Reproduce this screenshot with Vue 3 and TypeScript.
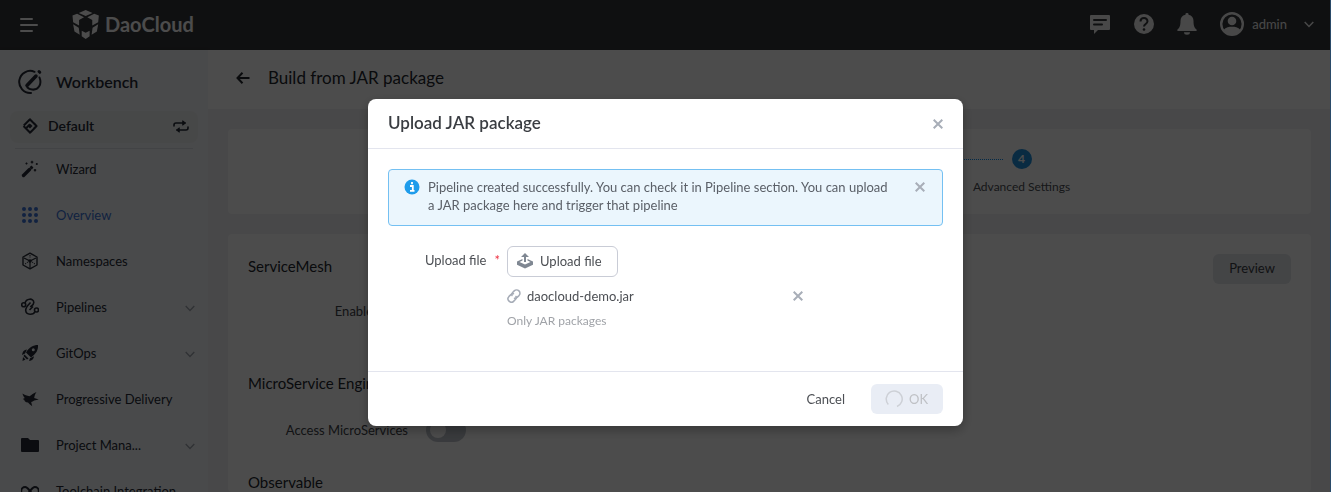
<script setup lang="ts">
import { ref } from 'vue'

interface NavItem {
  label: string
  icon: string
  active?: boolean
  expandable?: boolean
}

const navItems: NavItem[] = [
  { label: 'Wizard', icon: 'wizard' },
  { label: 'Overview', icon: 'overview', active: true },
  { label: 'Namespaces', icon: 'namespaces' },
  { label: 'Pipelines', icon: 'pipelines', expandable: true },
  { label: 'GitOps', icon: 'gitops', expandable: true },
  { label: 'Progressive Delivery', icon: 'delivery' },
  { label: 'Project Mana...', icon: 'project', expandable: true },
  { label: 'Toolchain Integration', icon: 'toolchain' },
]

const gridDots = [3, 9, 15]
const accessMicroServices = ref(false)
const modalOpen = ref(true)
const alertOpen = ref(true)
const files = ref<string[]>(['daocloud-demo.jar'])

function removeFile(name: string): void {
  files.value = files.value.filter((file) => file !== name)
}
</script>

<template>
  <div class="app">
    <header class="topbar">
      <button class="plain menu" aria-label="Toggle menu">
        <svg width="18" height="14" viewBox="0 0 18 14" fill="none" stroke="currentColor" stroke-width="2" stroke-linecap="round">
          <path d="M1 1h11M1 7h16M1 13h11" />
        </svg>
      </button>
      <a class="brand" href="#">
        <svg width="27" height="29" viewBox="216 30 81 88" fill="currentColor">
          <path d="M236 39 257 30l21 9-21 9z" />
          <path d="M217 47l14-6 21 11-15 8v17l-18-10zM297 47l-14-6-21 11 15 8v17l18-10z" />
          <path d="M219 73l17 11 3 21-16-10zM295 73l-17 11-3 21 16-10z" />
          <path d="M245 93l12 6 12-6v17l-12 8-12-8z" />
        </svg>
        <span>DaoCloud</span>
      </a>
      <div class="tools">
        <button class="plain" aria-label="Messages">
          <svg width="22" height="20" viewBox="0 0 22 20">
            <path d="M2 1h18a1 1 0 0 1 1 1v13a1 1 0 0 1-1 1H9l-4 4v-4H2a1 1 0 0 1-1-1V2a1 1 0 0 1 1-1z" fill="currentColor" />
            <path d="M5 6h12M5 10.500h8" stroke="#333639" stroke-width="2" stroke-linecap="round" />
          </svg>
        </button>
        <button class="plain" aria-label="Help">
          <svg width="20" height="20" viewBox="0 0 20 20">
            <circle cx="10" cy="10" r="10" fill="currentColor" />
            <path d="M6.500 7.500C6.500 3 13.500 3 13.500 7.300c0 2.700-3.500 2.700-3.500 5.200" fill="none" stroke="#333639" stroke-width="2" />
            <circle cx="10" cy="15.500" r="1.300" fill="#333639" />
          </svg>
        </button>
        <button class="plain" aria-label="Notifications">
          <svg width="20" height="22" viewBox="0 0 20 22" fill="currentColor">
            <path d="M10 0a1.500 1.500 0 0 1 1.500 1.800C15 2.500 16.500 5 16.500 8c0 5 1 7 3.100 8.500V18H.4v-1.500C2.500 15 3.500 13 3.500 8c0-3 1.500-5.500 5-6.200A1.500 1.500 0 0 1 10 0zM7 19.200h6a3 2.500 0 0 1-6 0z" />
          </svg>
        </button>
        <button class="plain user">
          <svg width="24" height="24" viewBox="0 0 24 24">
            <circle cx="12" cy="12" r="10.800" fill="none" stroke="currentColor" stroke-width="2.400" />
            <circle cx="12" cy="9" r="4.300" fill="currentColor" />
            <path d="M3.500 18C6 15.200 9 14.800 12 14.800s6 .4 8.500 3.200A11.500 11.500 0 0 1 12 23a11.500 11.500 0 0 1-8.500-5z" fill="currentColor" />
          </svg>
          <span>admin</span>
          <svg class="caret" width="10" height="7" viewBox="0 0 10 7" fill="none" stroke="currentColor" stroke-width="1.500">
            <path d="M.7 1 5 5.500 9.300 1" />
          </svg>
        </button>
      </div>
    </header>

    <div class="body">
      <aside class="sidebar">
        <div class="product">
          <svg width="26" height="26" viewBox="0 0 26 26" fill="none" stroke="currentColor" stroke-width="2" stroke-linecap="round">
            <path d="M17.500 2.800A11 11 0 1 0 14 23.900M22.500 8.500c2.800 7-1.500 13-7.500 12-2-.2-3.600-1-4.500-2" />
            <path d="M10 16.500 19 7" stroke-width="3.500" />
            <path d="M22 2.500l.8.800" stroke-width="3" />
          </svg>
          <span>Workbench</span>
        </div>
        <button class="plain workspace">
          <svg width="16" height="16" viewBox="0 0 16 16" fill="none" stroke="currentColor" stroke-width="2.600">
            <path d="M1.800 7.500 7.500 1.800M5.500 3.800 8 1.500l2.800 2.800M9.800 3.300l4.700 4.700M12.200 5.500 14.500 8l-2.800 2.800M14.200 8.500 8.500 14.200M10.500 12.200 8 14.500l-2.800-2.800M6.200 12.700 1.500 8M3.800 10.500 8 6.300" stroke-width="2" />
            <path d="M6 8.500 8.500 6l2 2L8 10.500z" fill="currentColor" stroke="none" />
          </svg>
          <span>Default</span>
          <svg class="swap" width="16" height="13" viewBox="0 0 16 13" fill="none" stroke="currentColor" stroke-width="1.600" stroke-linecap="round" stroke-linejoin="round">
            <path d="M1 6V5a2 2 0 0 1 2-2h9M15 7v1a2 2 0 0 1-2 2H4" />
            <path d="M10 1 12.500 3 10 5zM6 8 3.500 10 6 12z" fill="currentColor" stroke-width="1" />
          </svg>
        </button>
        <nav>
          <ul>
            <li v-for="item in navItems" :key="item.label">
              <a href="#" :class="{ active: item.active }">
                <svg width="18" height="18" viewBox="0 0 18 18" fill="none" stroke="currentColor">
                  <template v-if="item.icon === 'wizard'">
                    <path d="M2.500 15.500 8.500 9.500" stroke-width="3.400" stroke-linecap="round" />
                    <path d="M9 6.800 11.300 9M10 6l2 2" stroke-width="1.200" />
                    <path d="M11 .8v2.600M9.700 2.100h2.600M5.500 2.500v2M4.500 3.500h2M15.800 3v2M14.800 4h2M14 9v2.400M12.800 10.200h2.400" stroke-width="1.200" />
                  </template>
                  <g v-else-if="item.icon === 'overview'" fill="currentColor" stroke="none">
                    <template v-for="y in gridDots" :key="y">
                      <circle v-for="x in gridDots" :key="x" :cx="x" :cy="y" r="2" />
                    </template>
                  </g>
                  <g v-else-if="item.icon === 'namespaces'" stroke-width="1.400" stroke-linejoin="round">
                    <path d="M9 1.200 16 5v8l-7 3.800L2 13V5z" />
                    <path d="M9 9v7M9 9 3 6M9 9l6-3" stroke-width="1.200" />
                    <path d="M9 3v3M4 12l3-2M14 12l-3-2" stroke-dasharray="1.500 1" stroke-width="1" />
                    <circle cx="9" cy="9" r="1.800" fill="currentColor" stroke="none" />
                  </g>
                  <g v-else-if="item.icon === 'pipelines'" stroke-width="1.600">
                    <circle cx="2.700" cy="6.700" r="2" />
                    <circle cx="15.500" cy="12" r="2" />
                    <path d="M4 5C5 .5 12.500-.5 12.800 4.500c0 2.200-2 3.200-3.500 4.500" />
                    <path d="M9.500 4.500C7.500 7 4.500 9 4.700 12.500c.5 5 8 4.500 9.300 1" />
                    <path d="M12 8.500 8.500 12" />
                  </g>
                  <g v-else-if="item.icon === 'gitops'" fill="currentColor" stroke="none">
                    <path fill-rule="evenodd" d="M17 1c.3 5-1.500 8.500-7 12.500L5 8.500C8.500 3 12 1 17 1zm-4.700 3.300a1.500 1.500 0 1 0 0 3 1.500 1.500 0 0 0 0-3z" />
                    <path d="M6 5.500 4 9.500 1 11c.5-3.500 2-5.300 5-5.500zM13 12.200 9 14.200 8 17c3.200-.5 4.800-2 5-4.800zM3.500 10.500l4 4L6 15.500 2.500 12zM2 13l2.500 2.500L1.500 17z" />
                  </g>
                  <path v-else-if="item.icon === 'delivery'" fill="currentColor" stroke="none" d="M1.500 3.500c2 1.500 4.500 2 7 2.800C10.500 5 12.500 3 15.500 2c-1.500 2-2 4-2.300 6l4.600 1.500-4.600 1c-1.200.8-2 1.300-3 1.500l1 4.300C9.500 15 8.300 14 7 12.500 4.500 12.300 3 11 3.500 10L1.800 9l2-1C2.500 6.500 1.800 5 1.500 3.500z" />
                  <path v-else-if="item.icon === 'project'" fill="currentColor" stroke="none" d="M1 2h6l2 2h8a1 1 0 0 1 1 1v10a1 1 0 0 1-1 1H1a1 1 0 0 1-1-1V3a1 1 0 0 1 1-1z" />
                  <path v-else stroke-width="2" d="M9 9C7 6.500 6 5 4.200 5a4 4 0 0 0 0 8C6 13 7 11.500 9 9s3-4 4.800-4a4 4 0 0 1 0 8C12 13 11 11.500 9 9z" />
                </svg>
                <span>{{ item.label }}</span>
                <svg v-if="item.expandable" class="chevron" width="10" height="7" viewBox="0 0 10 7" fill="none" stroke="currentColor" stroke-width="1.300">
                  <path d="M.7 1 5 5.500 9.300 1" />
                </svg>
              </a>
            </li>
          </ul>
        </nav>
      </aside>

      <main>
        <div class="page-head">
          <button class="plain" aria-label="Back">
            <svg width="14" height="12" viewBox="0 0 14 12" fill="none" stroke="currentColor" stroke-width="2">
              <path d="M6.500.8 1.500 6l5 5.200M1.500 6H13.500" />
            </svg>
          </button>
          <h1>Build from JAR package</h1>
        </div>
        <div class="content">
          <section class="card">
            <ol class="steps">
              <li class="step">
                <span class="step-row"><i class="line"></i><b>4</b></span>
                <span class="step-label">Advanced Settings</span>
              </li>
            </ol>
          </section>
          <section class="card form">
            <div class="form-head">
              <h2>ServiceMesh</h2>
              <button class="preview">Preview</button>
            </div>
            <div class="row"><span class="row-label">Enable Mesh</span></div>
            <h2 class="group">MicroService Engine</h2>
            <div class="row">
              <label class="row-label" for="access">Access MicroServices</label>
              <input id="access" v-model="accessMicroServices" class="switch" type="checkbox" role="switch" />
            </div>
            <h2 class="group tight">Observable</h2>
          </section>
        </div>
      </main>
    </div>

    <div v-if="modalOpen" class="mask">
      <div class="modal" role="dialog" aria-modal="true" aria-labelledby="modal-title">
        <header class="modal-head">
          <h2 id="modal-title">Upload JAR package</h2>
          <button class="plain close" aria-label="Close" @click="modalOpen = false">
            <svg width="10" height="10" viewBox="0 0 10 10" stroke="currentColor" stroke-width="2"><path d="M.7.7l8.600 8.600M9.300.7.7 9.300" /></svg>
          </button>
        </header>
        <div class="modal-body">
          <div v-if="alertOpen" class="alert" role="status">
            <svg class="info" width="16" height="16" viewBox="0 0 16 16">
              <circle cx="8" cy="8" r="7.500" fill="#1e9ceb" />
              <path d="M6 7h2.800v4.500M6 11.800h4.500M8 3v2.200" fill="none" stroke="#fff" stroke-width="1.800" />
            </svg>
            <p>Pipeline created successfully. You can check it in Pipeline section. You can upload a JAR package here and trigger that pipeline</p>
            <button class="plain close" aria-label="Dismiss" @click="alertOpen = false">
              <svg width="10" height="10" viewBox="0 0 10 10" stroke="currentColor" stroke-width="2"><path d="M.7.7l8.600 8.600M9.300.7.7 9.300" /></svg>
            </button>
          </div>
          <div class="field">
            <label class="field-label" for="upload">Upload file<span class="required">*</span></label>
            <div class="field-main">
              <button id="upload" class="upload">
                <svg width="18" height="16" viewBox="0 0 18 16" fill="#7f8792">
                  <path d="M9 0l4 4h-3v5H8V4H5z" />
                  <path d="M6.500 6v1.500L3.500 9 9 11.500 14.500 9l-3-1.500V6L17 8.500v3.200L9 15.500l-8-3.800V8.500z" />
                </svg>
                <span>Upload file</span>
              </button>
              <div v-for="file in files" :key="file" class="file">
                <svg width="14" height="14" viewBox="0 0 14 14" fill="none" stroke="#a5abb6" stroke-width="1.500" stroke-linecap="round">
                  <path d="M5 6.500c-.6-1-.4-2 .4-2.800l1.800-1.800a3.300 3.300 0 0 1 4.800 4.700l-1.900 1.800a3.300 3.300 0 0 1-2.600.9" />
                  <path d="M9 7.500c.6 1 .4 2-.4 2.800l-1.800 1.800A3.300 3.300 0 0 1 2 7.400l1.900-1.800a3.300 3.300 0 0 1 2.600-.9" />
                </svg>
                <span>{{ file }}</span>
                <button class="plain close" aria-label="Remove file" @click="removeFile(file)">
                  <svg width="10" height="10" viewBox="0 0 10 10" stroke="currentColor" stroke-width="2"><path d="M.7.7l8.600 8.600M9.300.7.7 9.300" /></svg>
                </button>
              </div>
              <p class="hint">Only JAR packages</p>
            </div>
          </div>
        </div>
        <footer class="modal-foot">
          <button class="plain cancel" @click="modalOpen = false">Cancel</button>
          <button class="ok" disabled>
            <svg width="18" height="18" viewBox="0 0 18 18" fill="none" stroke="#cdd0d6" stroke-width="1.500">
              <path d="M3.300 14.400A8 8 0 1 1 12 16.500" />
            </svg>
            <span>OK</span>
          </button>
        </footer>
      </div>
    </div>
    <div class="edge"></div>
  </div>
</template>

<style>
body {
  margin: 0;
  overflow: hidden;
}
</style>

<style scoped>
.app {
  height: 100vh;
  display: flex;
  flex-direction: column;
  overflow: hidden;
  font-family: Lato, 'Open Sans', sans-serif;
  font-size: 13px;
  line-height: 18px;
  color: #3d4147;
}
h1, h2, p, ul, ol { margin: 0; padding: 0; font-weight: 400; }
ul, ol { list-style: none; }
button { font: inherit; color: inherit; cursor: pointer; }
svg { flex: none; display: block; }
a { color: inherit; text-decoration: none; }
.plain { display: flex; align-items: center; border: 0; padding: 0; background: none; }

.topbar {
  flex: none;
  height: 50px;
  box-sizing: border-box;
  display: flex;
  align-items: center;
  padding: 0 17px 2px 20px;
  background: #333639;
  color: #fff;
}
.menu { padding-top: 2px; }
.brand { display: flex; align-items: center; gap: 6px; margin-left: 34px; font-size: 20px; line-height: 28px; font-weight: 700; }
.tools { display: flex; align-items: center; gap: 23px; margin-left: auto; color: #f0f1f2; }
.user span { margin: 0 17px 0 8px; }

.body { flex: 1; display: flex; min-height: 0; }
.sidebar { flex: none; width: 208px; box-sizing: border-box; background: #f6f8fa; color: #252b36; box-shadow: 0 0 3px rgba(0, 0, 0, 0.15); overflow: hidden; }
.product { display: flex; align-items: center; gap: 13px; height: 61px; padding: 3px 0 0 17px; box-sizing: border-box; font-size: 16px; font-weight: 600; line-height: 22px; }
.workspace { width: 188px; height: 32px; margin: 0 10px; padding: 0 9px 2px 12px; border-radius: 8px; background: #eef0f2; font-size: 14px; font-weight: 600; }
.workspace span { margin: 0 auto 0 10px; }
nav { margin: 5px 15px 0; border-top: 1px solid #dde1e6; }
nav ul { display: flex; flex-direction: column; gap: 6px; }
nav a { display: flex; align-items: center; height: 40px; padding-left: 6px; white-space: nowrap; }
nav a span { margin-left: 17px; }
nav a.active { color: #3b74d8; }
.chevron { margin: 2px -2px 0 auto; color: #a0a6b0; }

main { flex: 1; min-width: 0; display: flex; flex-direction: column; background: #f2f2f3; }
.page-head { flex: none; height: 59px; display: flex; align-items: center; gap: 18px; padding: 0 28px 4px; background: #fff; box-sizing: border-box; color: #23272e; }
h1 { font-size: 17px; line-height: 22px; }
.content { flex: 1; min-height: 0; display: flex; flex-direction: column; gap: 20px; padding: 20px 20px 0; }
.card { background: #fff; border-radius: 4px; }
.steps { display: grid; grid-template-columns: repeat(4, 168px); justify-content: center; padding: 20px 0 18px; }
.step { grid-column: 4; display: flex; flex-direction: column; align-items: center; gap: 9px; }
.step-row { width: 100%; display: grid; grid-template-columns: 1fr 20px 1fr; align-items: center; }
.line { margin-right: 9px; border-top: 1px dotted #0a8cf0; }
.step b { grid-column: 2; line-height: 20px; border-radius: 10px; background: #1e8fdc; color: #fff; text-align: center; font-size: 12px; }
.step-label { font-size: 12px; color: #4b4f55; }
.form { flex: 1; padding: 20px 20px 0; overflow: hidden; }
.form-head { display: flex; justify-content: space-between; align-items: flex-start; height: 45px; }
h2 { font-size: 15px; line-height: 24px; color: #23272e; }
.preview { width: 78px; height: 30px; padding: 0 0 2px; border: 0; border-radius: 6px; background: #e3e6eb; }
.row { display: flex; align-items: center; height: 24px; gap: 18px; }
.group { margin: 48px 0 23px; }
.group.tight { margin-top: 28px; }
.row-label { width: 160px; text-align: right; }
.switch { appearance: none; width: 40px; height: 24px; margin: 0; padding: 4px; border-radius: 12px; background: #bfc4cc; }
.switch::before { content: ''; display: block; width: 16px; height: 16px; border-radius: 8px; background: #fff; }
.switch:checked { background: #1e8fdc; }
.switch:checked::before { margin-left: auto; }

.mask { position: fixed; inset: 0; display: flex; align-items: flex-start; justify-content: center; padding-top: 99px; background: rgba(0, 0, 0, 0.7); }
.modal { width: 595px; border-radius: 8px; background: #fff; box-shadow: 0 4px 12px rgba(0, 0, 0, 0.3); color: #4c4f54; }
.modal-head { display: flex; align-items: center; justify-content: space-between; height: 49px; padding: 0 20px; border-bottom: 1px solid #e3e5ee; }
.modal-head h2 { padding-bottom: 2px; font-size: 17px; font-weight: 600; color: #3a3d42; }
.close { color: #a8aeb8; }
.modal-body { padding: 20px 20px 42px; }
.alert { display: flex; align-items: flex-start; padding: 8px 17px 11px 15px; border: 1px solid #74c0f2; border-radius: 4px; background: #ebf6fd; color: #5b6068; }
.alert p { flex: 1; margin: 0 20px 0 8px; }
.alert .info { margin-top: 1px; }
.alert .close { margin-top: 4px; }
.field { display: flex; gap: 7px; margin-top: 20px; }
.field-label { width: 112px; line-height: 28px; text-align: right; }
.required { margin-left: 8px; color: #ee3344; }
.upload { display: flex; align-items: center; gap: 6px; width: 111px; height: 31px; padding: 0 8px 2px; border: 1px solid #c9ccd6; border-radius: 6px; background: #fff; }
.file { display: flex; align-items: center; width: 296px; gap: 6px; height: 18px; margin-top: 10px; }
.file .close { margin-left: auto; }
.hint { margin-top: 8px; font-size: 12px; line-height: 16px; color: #a0a3a8; }
.modal-foot { display: flex; justify-content: flex-end; align-items: center; gap: 26px; padding: 12px 20px; border-top: 1px solid #e3e5ee; }
.ok { display: flex; align-items: center; gap: 6px; width: 72px; height: 30px; padding: 0 14px; border: 0; border-radius: 6px; background: #e9edf5; color: #bfc1c5; cursor: default; }
.edge { position: fixed; inset: 0 0 0 auto; width: 1px; background: #2a4a68; }
</style>
